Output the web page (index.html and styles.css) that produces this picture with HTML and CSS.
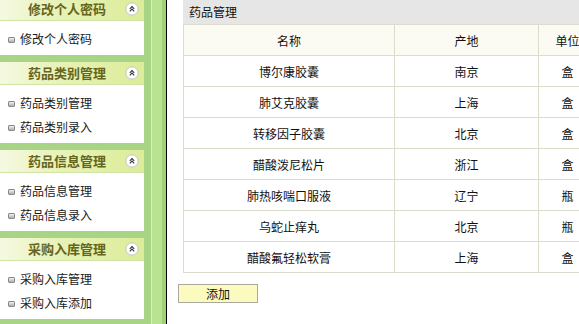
FILE: index.html
```html
<!DOCTYPE html>
<html lang="zh">
<head>
    <meta charset="UTF-8">
    <title>药品管理</title>
    <link rel="stylesheet" href="styles.css">
</head>
<body>
    <!-- 左侧菜单 -->
    <div class="sidebar">
        <div class="panel first">
            <div class="panel-head">修改个人密码<span class="fold"><svg width="14" height="14" viewBox="0 0 14 14"><circle cx="7" cy="7" r="6.2" fill="#fff" stroke="#c4c4c4"/><polyline points="4.8,6.8 7,4.6 9.2,6.8" fill="none" stroke="#333" stroke-width="1.1"/><polyline points="4.8,9.3 7,7.1 9.2,9.3" fill="none" stroke="#333" stroke-width="1.1"/></svg></span></div>
            <ul class="panel-list">
                <li>修改个人密码</li>
            </ul>
        </div>
        <div class="panel">
            <div class="panel-head">药品类别管理<span class="fold"><svg width="14" height="14" viewBox="0 0 14 14"><circle cx="7" cy="7" r="6.2" fill="#fff" stroke="#c4c4c4"/><polyline points="4.8,6.8 7,4.6 9.2,6.8" fill="none" stroke="#333" stroke-width="1.1"/><polyline points="4.8,9.3 7,7.1 9.2,9.3" fill="none" stroke="#333" stroke-width="1.1"/></svg></span></div>
            <ul class="panel-list">
                <li>药品类别管理</li>
                <li>药品类别录入</li>
            </ul>
        </div>
        <div class="panel">
            <div class="panel-head">药品信息管理<span class="fold"><svg width="14" height="14" viewBox="0 0 14 14"><circle cx="7" cy="7" r="6.2" fill="#fff" stroke="#c4c4c4"/><polyline points="4.8,6.8 7,4.6 9.2,6.8" fill="none" stroke="#333" stroke-width="1.1"/><polyline points="4.8,9.3 7,7.1 9.2,9.3" fill="none" stroke="#333" stroke-width="1.1"/></svg></span></div>
            <ul class="panel-list">
                <li>药品信息管理</li>
                <li>药品信息录入</li>
            </ul>
        </div>
        <div class="panel">
            <div class="panel-head">采购入库管理<span class="fold"><svg width="14" height="14" viewBox="0 0 14 14"><circle cx="7" cy="7" r="6.2" fill="#fff" stroke="#c4c4c4"/><polyline points="4.8,6.8 7,4.6 9.2,6.8" fill="none" stroke="#333" stroke-width="1.1"/><polyline points="4.8,9.3 7,7.1 9.2,9.3" fill="none" stroke="#333" stroke-width="1.1"/></svg></span></div>
            <ul class="panel-list">
                <li>采购入库管理</li>
                <li>采购入库添加</li>
            </ul>
        </div>
    </div>

    <!-- 分隔条 -->
    <div class="splitter"></div>

    <!-- 右侧内容 -->
    <div class="main">
        <div class="title-bar">药品管理</div>
        <table class="grid">
            <colgroup>
                <col class="c-name">
                <col class="c-place">
                <col class="c-unit">
            </colgroup>
            <tr class="head">
                <td>名称</td><td>产地</td><td>单位</td>
            </tr>
            <tr><td>博尔康胶囊</td><td>南京</td><td>盒</td></tr>
            <tr><td>肺艾克胶囊</td><td>上海</td><td>盒</td></tr>
            <tr><td>转移因子胶囊</td><td>北京</td><td>盒</td></tr>
            <tr><td>醋酸泼尼松片</td><td>浙江</td><td>盒</td></tr>
            <tr><td>肺热咳喘口服液</td><td>辽宁</td><td>瓶</td></tr>
            <tr><td>乌蛇止痒丸</td><td>北京</td><td>瓶</td></tr>
            <tr><td>醋酸氟轻松软膏</td><td>上海</td><td>盒</td></tr>
        </table>
        <button class="add-btn">添加</button>
    </div>
</body>
</html>
```

FILE: styles.css
```css
body {
    margin: 0;
    width: 579px;
    height: 324px;
    overflow: hidden;
    display: flex;
    background: #ffffff;
    font-family: "Noto Sans CJK SC", "DejaVu Sans", sans-serif;
    font-size: 12px;
    color: #111;
}
.sidebar {
    width: 151px;
    flex-shrink: 0;
    background: #a8d585;
    display: flex;
    flex-direction: column;
    gap: 7px;
}
.panel {
    width: 144px;
    background: #ffffff;
}
.panel.first {
    margin-top: -2px;
}
.panel-head {
    position: relative;
    height: 22px;
    line-height: 22px;
    padding-right: 10px;
    text-align: center;
    font-size: 13px;
    font-weight: bold;
    color: #65651c;
    background: linear-gradient(to right, #f6f9e2, #e8f2b8 40%, #dcec98);
    border-bottom: 1px solid #cfe6a8;
}
.fold {
    position: absolute;
    right: 5px;
    top: 4px;
    width: 14px;
    height: 14px;
    line-height: 0;
}
.panel-list {
    list-style: none;
    margin: 0;
    padding: 6px 0 4px 0;
}
.panel-list li {
    height: 24px;
    line-height: 24px;
    padding-left: 20px;
    position: relative;
    color: #1a1a1a;
}
.panel-list li::before {
    content: "";
    position: absolute;
    left: 8px;
    top: 10px;
    width: 5px;
    height: 4px;
    border: 1px solid #8a8a8a;
    border-radius: 1px;
    background: linear-gradient(#f0f0f0, #b0b0b0);
}
.splitter {
    width: 15px;
    flex-shrink: 0;
    background: linear-gradient(to right, #d6f2bc 0 1px, #b9e391 1px 11px, #9fd178 11px);
    border-right: 1px solid #000;
}
.main {
    flex: 1;
    min-width: 0;
    overflow: hidden;
    padding-left: 11px;
}
.title-bar {
    margin-left: 5px;
    height: 24px;
    line-height: 24px;
    padding-left: 6px;
    background: #e6e6e6;
    white-space: nowrap;
}
.grid {
    margin-left: 5px;
    border-collapse: collapse;
    table-layout: fixed;
    width: 413px;
}
.c-name { width: 211px; }
.c-place { width: 144px; }
.c-unit { width: 58px; }
.grid td {
    height: 30px;
    padding: 0;
    border: 1px solid #dcdccc;
    text-align: center;
    background: #ffffff;
    white-space: nowrap;
}
.grid .head td {
    background: #fbfbf3;
}
.add-btn {
    display: block;
    margin-top: 11px;
    width: 80px;
    height: 19px;
    padding: 0;
    font-family: inherit;
    font-size: 12px;
    color: #111;
    background: #fbfbbf;
    border: 1px solid #a9a9a0;
}
```
